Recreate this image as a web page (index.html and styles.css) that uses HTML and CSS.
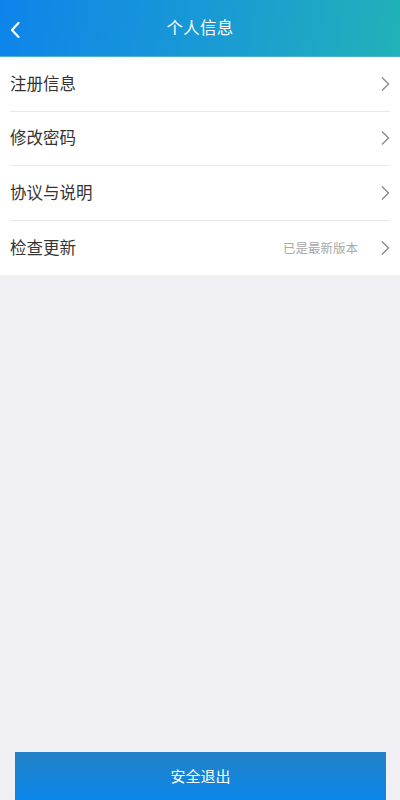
FILE: index.html
```html
<!DOCTYPE html>
<html lang="zh">
<head>
<meta charset="utf-8">
<link rel="stylesheet" href="styles.css">
</head>
<body>
<div class="page">
  <header class="topbar">
    <span class="back">
      <svg width="12" height="18" viewBox="0 0 12 18"><path d="M9.5 2 L3 9 L9.5 16" fill="none" stroke="#fff" stroke-width="2.2" stroke-linecap="round" stroke-linejoin="round"/></svg>
    </span>
    <h1 class="title">个人信息</h1>
  </header>
  <ul class="list">
    <li class="row"><span class="label">注册信息</span><span class="right"><svg class="chev" width="10" height="16" viewBox="0 0 10 16"><path d="M2 1.5 L8.5 8 L2 14.5" fill="none" stroke="#8a8a8a" stroke-width="1.4"/></svg></span></li>
    <li class="row"><span class="label">修改密码</span><span class="right"><svg class="chev" width="10" height="16" viewBox="0 0 10 16"><path d="M2 1.5 L8.5 8 L2 14.5" fill="none" stroke="#8a8a8a" stroke-width="1.4"/></svg></span></li>
    <li class="row"><span class="label">协议与说明</span><span class="right"><svg class="chev" width="10" height="16" viewBox="0 0 10 16"><path d="M2 1.5 L8.5 8 L2 14.5" fill="none" stroke="#8a8a8a" stroke-width="1.4"/></svg></span></li>
    <li class="row"><span class="label">检查更新</span><span class="right"><span class="note">已是最新版本</span><svg class="chev" width="10" height="16" viewBox="0 0 10 16"><path d="M2 1.5 L8.5 8 L2 14.5" fill="none" stroke="#8a8a8a" stroke-width="1.4"/></svg></span></li>
  </ul>
  <div class="spacer"></div>
  <div class="footer">
    <button class="logout">安全退出</button>
  </div>
</div>
</body>
</html>
```
FILE: styles.css
```css
* { box-sizing: border-box; }
html, body { margin: 0; padding: 0; }
body {
  font-family: "Noto Sans CJK SC", "Noto Sans", sans-serif;
  background: #f0eff4;
}
.page {
  height: 800px;
  display: flex;
  flex-direction: column;
}
.topbar {
  height: 57px;
  flex-shrink: 0;
  background: linear-gradient(100deg, #0d84ea 0%, #1a9bd3 55%, #21b2b8 100%);
  border-bottom: 1px solid #4bb5d0;
  display: flex;
  align-items: center;
  justify-content: center;
  padding-bottom: 2px;
  position: relative;
}
.back {
  position: absolute;
  left: 9px;
  top: 21px;
  display: flex;
}
.title {
  margin: 0;
  color: #fff;
  font-size: 16.5px;
  font-weight: 400;
  letter-spacing: 0.3px;
}
.list {
  list-style: none;
  margin: 0;
  padding: 0 10px;
  background: #fff;
}
.row {
  height: 54.5px;
  display: flex;
  align-items: center;
  justify-content: space-between;
  border-bottom: 1px solid #e8e8ec;
  padding-bottom: 2px;
}
.row:last-child { border-bottom: none; }
.label {
  font-size: 16.5px;
  color: #333;
}
.right {
  display: flex;
  align-items: center;
  padding-top: 2px;
}
.note {
  font-size: 12.5px;
  color: #a9a9a9;
  margin-right: 22px;
}
.chev { display: block; }
.spacer { flex: 1; }
.footer {
  padding: 0 14px 0 15px;
}
.logout {
  display: block;
  width: 100%;
  height: 48px;
  border: none;
  background: linear-gradient(180deg, #2482c6 0%, #0a86ea 100%);
  color: #fff;
  font-family: "Noto Sans CJK SC", sans-serif;
  font-size: 15px;
  border-radius: 0;
  padding-bottom: 2px;
}
```
